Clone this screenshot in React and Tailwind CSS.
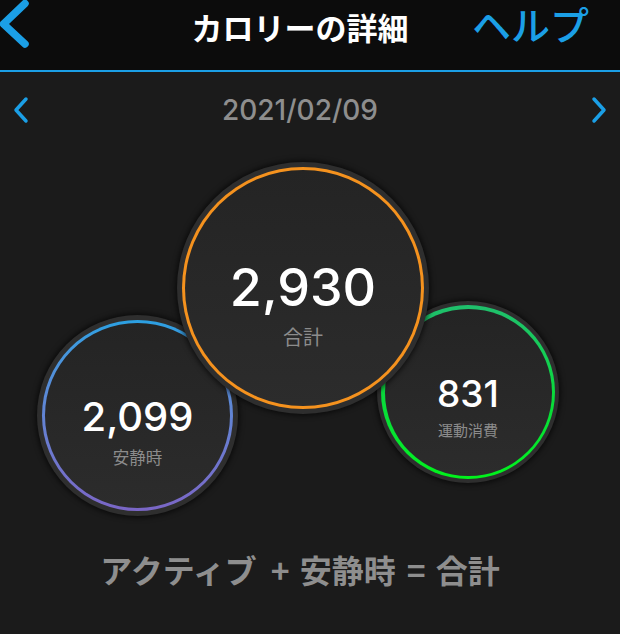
import React from "react";

const JP = "font-['Noto_Sans_CJK_JP','Noto_Sans',sans-serif]";
const NUM = "font-['Inter','Liberation_Sans',sans-serif]";

function Circle({ pos, ring, fill, children }) {
  return (
    <div className={`absolute rounded-full bg-[#2e2e2e] shadow-[0_0_5px_2px_rgba(0,0,0,0.55)] ${pos}`}>
      <div className={`w-full h-full rounded-full ${ring}`}>
        <div className={`w-full h-full rounded-full bg-gradient-to-b from-[#242424] to-[#2c2c2c] flex flex-col items-center justify-center ${fill}`}>
          {children}
        </div>
      </div>
    </div>
  );
}

export default function App() {
  return (
    <div className="w-[620px] h-[634px] bg-[#1b1b1b] flex flex-col overflow-hidden">
      {/* header */}
      <div className="h-[70px] bg-[#0c0c0c] flex items-start">
        <div className="w-[150px] flex">
          <svg width="30" height="50" viewBox="0 0 30 50">
            <path d="M25 3.5 L3.5 24 L25 44" fill="none" stroke="#1b9fe6" strokeWidth="7.5" strokeLinecap="round" strokeLinejoin="round" />
          </svg>
        </div>
        <div className={`flex-1 text-center text-white text-[31px] font-bold leading-none mt-[11px] ${JP}`}>
          カロリーの詳細
        </div>
        <div className="w-[170px] flex justify-end pr-[31px] pt-[4px]">
          <span className={`text-[#1b9fe6] text-[39px] font-medium leading-none whitespace-nowrap ${JP}`}>ヘルプ</span>
        </div>
      </div>
      <div className="h-[2px] bg-[#1b9fe6]" />

      {/* date row */}
      <div className="h-[76px] grid grid-cols-[1fr_auto_1fr] items-center px-[12px]">
        <svg width="18" height="28" viewBox="0 0 18 28">
          <path d="M14 3 L4 14 L14 25" fill="none" stroke="#1b9fe6" strokeWidth="3.5" strokeLinecap="round" strokeLinejoin="round" />
        </svg>
        <span className={`text-[#8e8e8e] text-[28px] font-medium leading-none mr-[20px] ${NUM}`}>2021/02/09</span>
        <div className="flex justify-end">
          <svg width="18" height="28" viewBox="0 0 18 28">
            <path d="M4 3 L14 14 L4 25" fill="none" stroke="#1b9fe6" strokeWidth="3.5" strokeLinecap="round" strokeLinejoin="round" />
          </svg>
        </div>
      </div>

      {/* circles canvas */}
      <div className="relative h-[392px]">
        <Circle
          pos="left-[37px] top-[167px] w-[201px] h-[201px] p-[5px]"
          ring="p-[3px] bg-gradient-to-b from-[#2aa0e2] to-[#7a66c6]"
          fill="pt-[31px]"
        >
          <div className={`text-white text-[40px] font-medium leading-none ${NUM}`}>2,099</div>
          <div className={`text-[#8c8c8c] text-[16.5px] leading-none mt-[12px] ${JP}`}>安静時</div>
        </Circle>
        <Circle
          pos="left-[377px] top-[153px] w-[182px] h-[182px] p-[4px]"
          ring="p-[3.5px] bg-gradient-to-b from-[#1fbf6c] via-[#0ad93c] to-[#00f21a]"
          fill="pt-[28px]"
        >
          <div className={`text-white text-[37px] font-medium leading-none ${NUM}`}>831</div>
          <div className={`text-[#8c8c8c] text-[15px] leading-none mt-[10px] ${JP}`}>運動消費</div>
        </Circle>
        <Circle
          pos="left-[177px] top-[14px] w-[252px] h-[252px] p-[5px]"
          ring="p-[3px] bg-[#f5921e]"
          fill="pt-[32px]"
        >
          <div className={`text-white text-[52px] font-medium leading-none ${NUM}`}>2,930</div>
          <div className={`text-[#8c8c8c] text-[20px] leading-none mt-[13px] ${JP}`}>合計</div>
        </Circle>
      </div>

      {/* bottom formula */}
      <div className={`h-[58px] flex items-center justify-center mr-[20px] text-[#8e8e8e] text-[32px] font-bold leading-none ${JP}`}>
        <span>アクティブ</span>
        <span className="ml-[14px]">+</span>
        <span className="ml-[10px]">安静時</span>
        <span className="ml-[11px]">=</span>
        <span className="ml-[10px]">合計</span>
      </div>
    </div>
  );
}
